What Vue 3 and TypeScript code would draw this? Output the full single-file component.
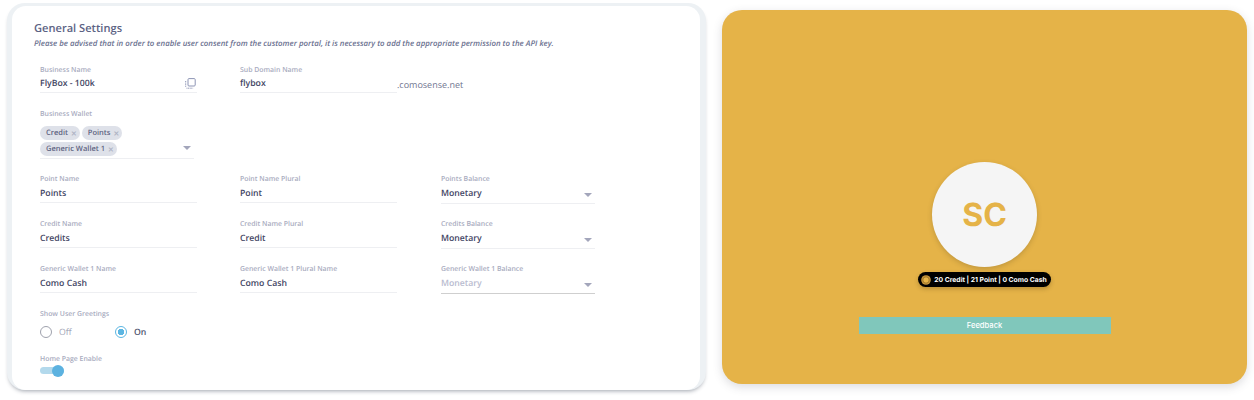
<template>
  <div class="page">
    <section class="panel">
      <div class="card">
        <h2 class="title">General Settings</h2>
        <p class="note">
          Please be advised that in order to enable user consent from the customer portal, it is necessary to add the appropriate permission to the API key.
        </p>

        <div class="row first">
          <div class="field">
            <label>Business Name</label>
            <div class="value">
              <span>FlyBox - 100k</span>
              <svg class="copy" width="11" height="11" viewBox="0 0 11 11" fill="none" stroke="#8d94b4">
                <rect x="3" y="0.6" width="7.2" height="7.4" rx="1" />
                <path d="M0.7 3v6.2M1.5 10.2h6.6" stroke-dasharray="1 .6" />
              </svg>
            </div>
          </div>
          <div class="field">
            <label>Sub Domain Name</label>
            <div class="value"><span>flybox</span></div>
            <span class="suffix">.comosense.net</span>
          </div>
        </div>

        <div class="wallet">
          <label>Business Wallet</label>
          <div class="chips">
            <div class="chip-list">
              <span v-for="chip in chips" :key="chip" class="chip">
                {{ chip }}<i class="chip-x">×</i>
              </span>
            </div>
            <span class="caret wallet-caret"></span>
          </div>
        </div>

        <div class="rows">
          <div v-for="row in rows" :key="row.name" class="row">
            <div class="field">
              <label>{{ row.name }}</label>
              <div class="value"><span>{{ row.nameValue }}</span></div>
            </div>
            <div class="field">
              <label>{{ row.plural }}</label>
              <div class="value"><span>{{ row.pluralValue }}</span></div>
            </div>
            <div class="field select" :class="{ disabled: row.disabled }">
              <label>{{ row.balance }}</label>
              <div class="value">
                <span>Monetary</span>
                <span class="caret"></span>
              </div>
            </div>
          </div>
        </div>

        <div class="greetings">
          <label>Show User Greetings</label>
          <div class="radios">
            <span class="radio"><i class="dot"></i><em>Off</em></span>
            <span class="radio on"><i class="dot"></i><em>On</em></span>
          </div>
        </div>

        <div class="home">
          <label>Home Page Enable</label>
          <div class="toggle"><i></i></div>
        </div>
      </div>
    </section>

    <section class="preview">
      <div class="avatar">SC</div>
      <div class="balance">
        <svg width="10" height="10" viewBox="0 0 10 10">
          <circle cx="5" cy="5" r="4.8" fill="#c8963a" />
          <circle cx="5" cy="5" r="3.2" fill="#e6b448" stroke="#8f6a25" stroke-width=".8" />
        </svg>
        <span>20 Credit | 21 Point | 0 Como Cash</span>
      </div>
      <button class="feedback" type="button">Feedback</button>
    </section>
  </div>
</template>

<script setup lang="ts">
type WalletRow = {
  name: string;
  nameValue: string;
  plural: string;
  pluralValue: string;
  balance: string;
  disabled?: boolean;
};

const chips: string[] = ["Credit", "Points", "Generic Wallet 1"];

const rows: WalletRow[] = [
  { name: "Point Name", nameValue: "Points", plural: "Point Name Plural", pluralValue: "Point", balance: "Points Balance" },
  { name: "Credit Name", nameValue: "Credits", plural: "Credit Name Plural", pluralValue: "Credit", balance: "Credits Balance" },
  {
    name: "Generic Wallet 1 Name",
    nameValue: "Como Cash",
    plural: "Generic Wallet 1 Plural Name",
    pluralValue: "Como Cash",
    balance: "Generic Wallet 1 Balance",
    disabled: true,
  },
];
</script>

<style>
html,
body {
  background: #fff;
  overflow: hidden;
}
</style>

<style scoped>
.page {
  display: flex;
  align-items: flex-start;
  width: 1254px;
  height: 400px;
  padding: 3px 7px 0 7px;
  box-sizing: border-box;
  font-family: "Open Sans", "Noto Sans", sans-serif;
  text-rendering: geometricPrecision;
}

.panel {
  width: 699px;
  height: 387px;
  padding: 3px 6px 0 5px;
  box-sizing: border-box;
  background: #edf1f4;
  border-radius: 18px;
  box-shadow: 0 3px 4px -2px rgba(40, 50, 70, 0.45);
}

.card {
  height: 100%;
  padding: 15px 0 0 22px;
  box-sizing: border-box;
  background: #fff;
  border-radius: 14px;
}

.title {
  margin: 0;
  font-size: 11.1px;
  line-height: 16px;
  font-weight: 600;
  color: #5c6384;
}

.note {
  margin: 1px 0 0;
  font-size: 7.85px;
  line-height: 12px;
  font-style: italic;
  font-weight: 600;
  color: #6b7190;
  white-space: nowrap;
}

label {
  display: block;
  font-size: 6.9px;
  line-height: 11px;
  font-weight: 600;
  color: #a9acc0;
  white-space: nowrap;
}

.row {
  display: flex;
  gap: 43px;
  padding-left: 6px;
}

.row.first {
  margin-top: 15px;
}

.row.first .value {
  height: 17px;
}

.rows {
  display: flex;
  flex-direction: column;
  gap: 15px;
  margin-top: 15px;
}

.field {
  position: relative;
  width: 157px;
  flex: none;
}

.field.select {
  width: 154px;
  margin-left: 1px;
}

.value {
  display: flex;
  align-items: center;
  justify-content: space-between;
  height: 18px;
  padding-bottom: 2px;
  box-sizing: border-box;
  border-bottom: 1px solid #eeeff2;
  font-size: 8.7px;
  font-weight: 600;
  color: #3f4563;
}

.field.select .value {
  height: 19px;
  padding-bottom: 2px;
}

.field.disabled .value {
  color: #b9bcd0;
  border-bottom-color: #cfcfcf;
}

.copy {
  margin-right: 1px;
}

.suffix {
  position: absolute;
  left: 157px;
  top: 13px;
  font-size: 9px;
  line-height: 14px;
  font-weight: 500;
  color: #6f7590;
  white-space: nowrap;
}

.wallet {
  width: 154px;
  margin: 16px 0 0 6px;
}

.chips {
  display: flex;
  align-items: flex-end;
  justify-content: space-between;
  margin-top: 6px;
  padding-bottom: 2px;
  border-bottom: 1px solid #eeeff2;
}

.chip-list {
  display: flex;
  flex-wrap: wrap;
  gap: 2px;
  width: 125px;
}

.chip {
  display: inline-flex;
  align-items: center;
  height: 14px;
  padding: 0 3px 0 6px;
  border-radius: 7px;
  background: #dee1e9;
  font-size: 7.5px;
  font-weight: 600;
  color: #5e6482;
}

.chip-x {
  margin-left: 3px;
  font-style: normal;
  font-size: 10px;
  line-height: 1;
  color: #aeb3c4;
}

.caret {
  flex: none;
  width: 0;
  height: 0;
  margin: 3px 3px 0 0;
  border-left: 4px solid transparent;
  border-right: 4px solid transparent;
  border-top: 4px solid #a3a6bb;
}

.wallet-caret {
  margin-bottom: 6px;
}

.greetings {
  margin: 15px 0 0 6px;
}

.radios {
  display: flex;
  gap: 32px;
  margin-top: 6px;
}

.radio {
  display: flex;
  align-items: center;
  gap: 7px;
  width: 43px;
}

.dot {
  flex: none;
  width: 12px;
  height: 12px;
  box-sizing: border-box;
  border: 1px solid #9fa2ad;
  border-radius: 50%;
}

.radio em {
  font-style: normal;
  font-size: 8.7px;
  font-weight: 500;
  color: #a4a7b8;
}

.radio.on .dot {
  border-color: #5cb6e2;
  background: radial-gradient(circle, #5cb6e2 0 3px, #fff 3.5px);
}

.radio.on em {
  color: #4f5570;
  font-weight: 600;
}

.home {
  margin: 16px 0 0 6px;
}

.toggle {
  position: relative;
  width: 24px;
  height: 7px;
  margin-top: 2px;
  border-radius: 4px;
  background: #b3d9ec;
}

.toggle i {
  position: absolute;
  right: 0;
  top: -2.5px;
  width: 12px;
  height: 12px;
  border-radius: 50%;
  background: #5cb2e0;
}

.preview {
  display: flex;
  flex-direction: column;
  align-items: center;
  width: 525px;
  height: 374px;
  margin: 7px 0 0 16px;
  padding-top: 152px;
  box-sizing: border-box;
  background: #e5b348;
  border-radius: 20px;
  box-shadow: 0 3px 10px rgba(60, 60, 80, 0.18);
  font-family: Inter, "Liberation Sans", sans-serif;
}

.avatar {
  display: flex;
  align-items: center;
  justify-content: center;
  width: 105px;
  height: 105px;
  border-radius: 50%;
  background: #f5f5f5;
  box-shadow: 0 2px 5px rgba(90, 70, 30, 0.25);
  font-size: 32px;
  font-weight: 700;
  color: #e5b348;
}

.balance {
  display: flex;
  align-items: center;
  gap: 3px;
  height: 15px;
  margin-top: 5px;
  padding: 0 4px 0 3px;
  border-radius: 8px;
  background: #000;
  box-shadow: 0 2px 4px rgba(80, 60, 20, 0.3);
  font-size: 6.8px;
  font-weight: 700;
  color: #fff;
  white-space: nowrap;
}

.feedback {
  width: 252px;
  height: 17px;
  margin-top: 30px;
  padding: 0;
  border: 0;
  background: #80c7bb;
  font-family: inherit;
  font-size: 7.6px;
  font-weight: 500;
  color: #fff;
}
</style>
